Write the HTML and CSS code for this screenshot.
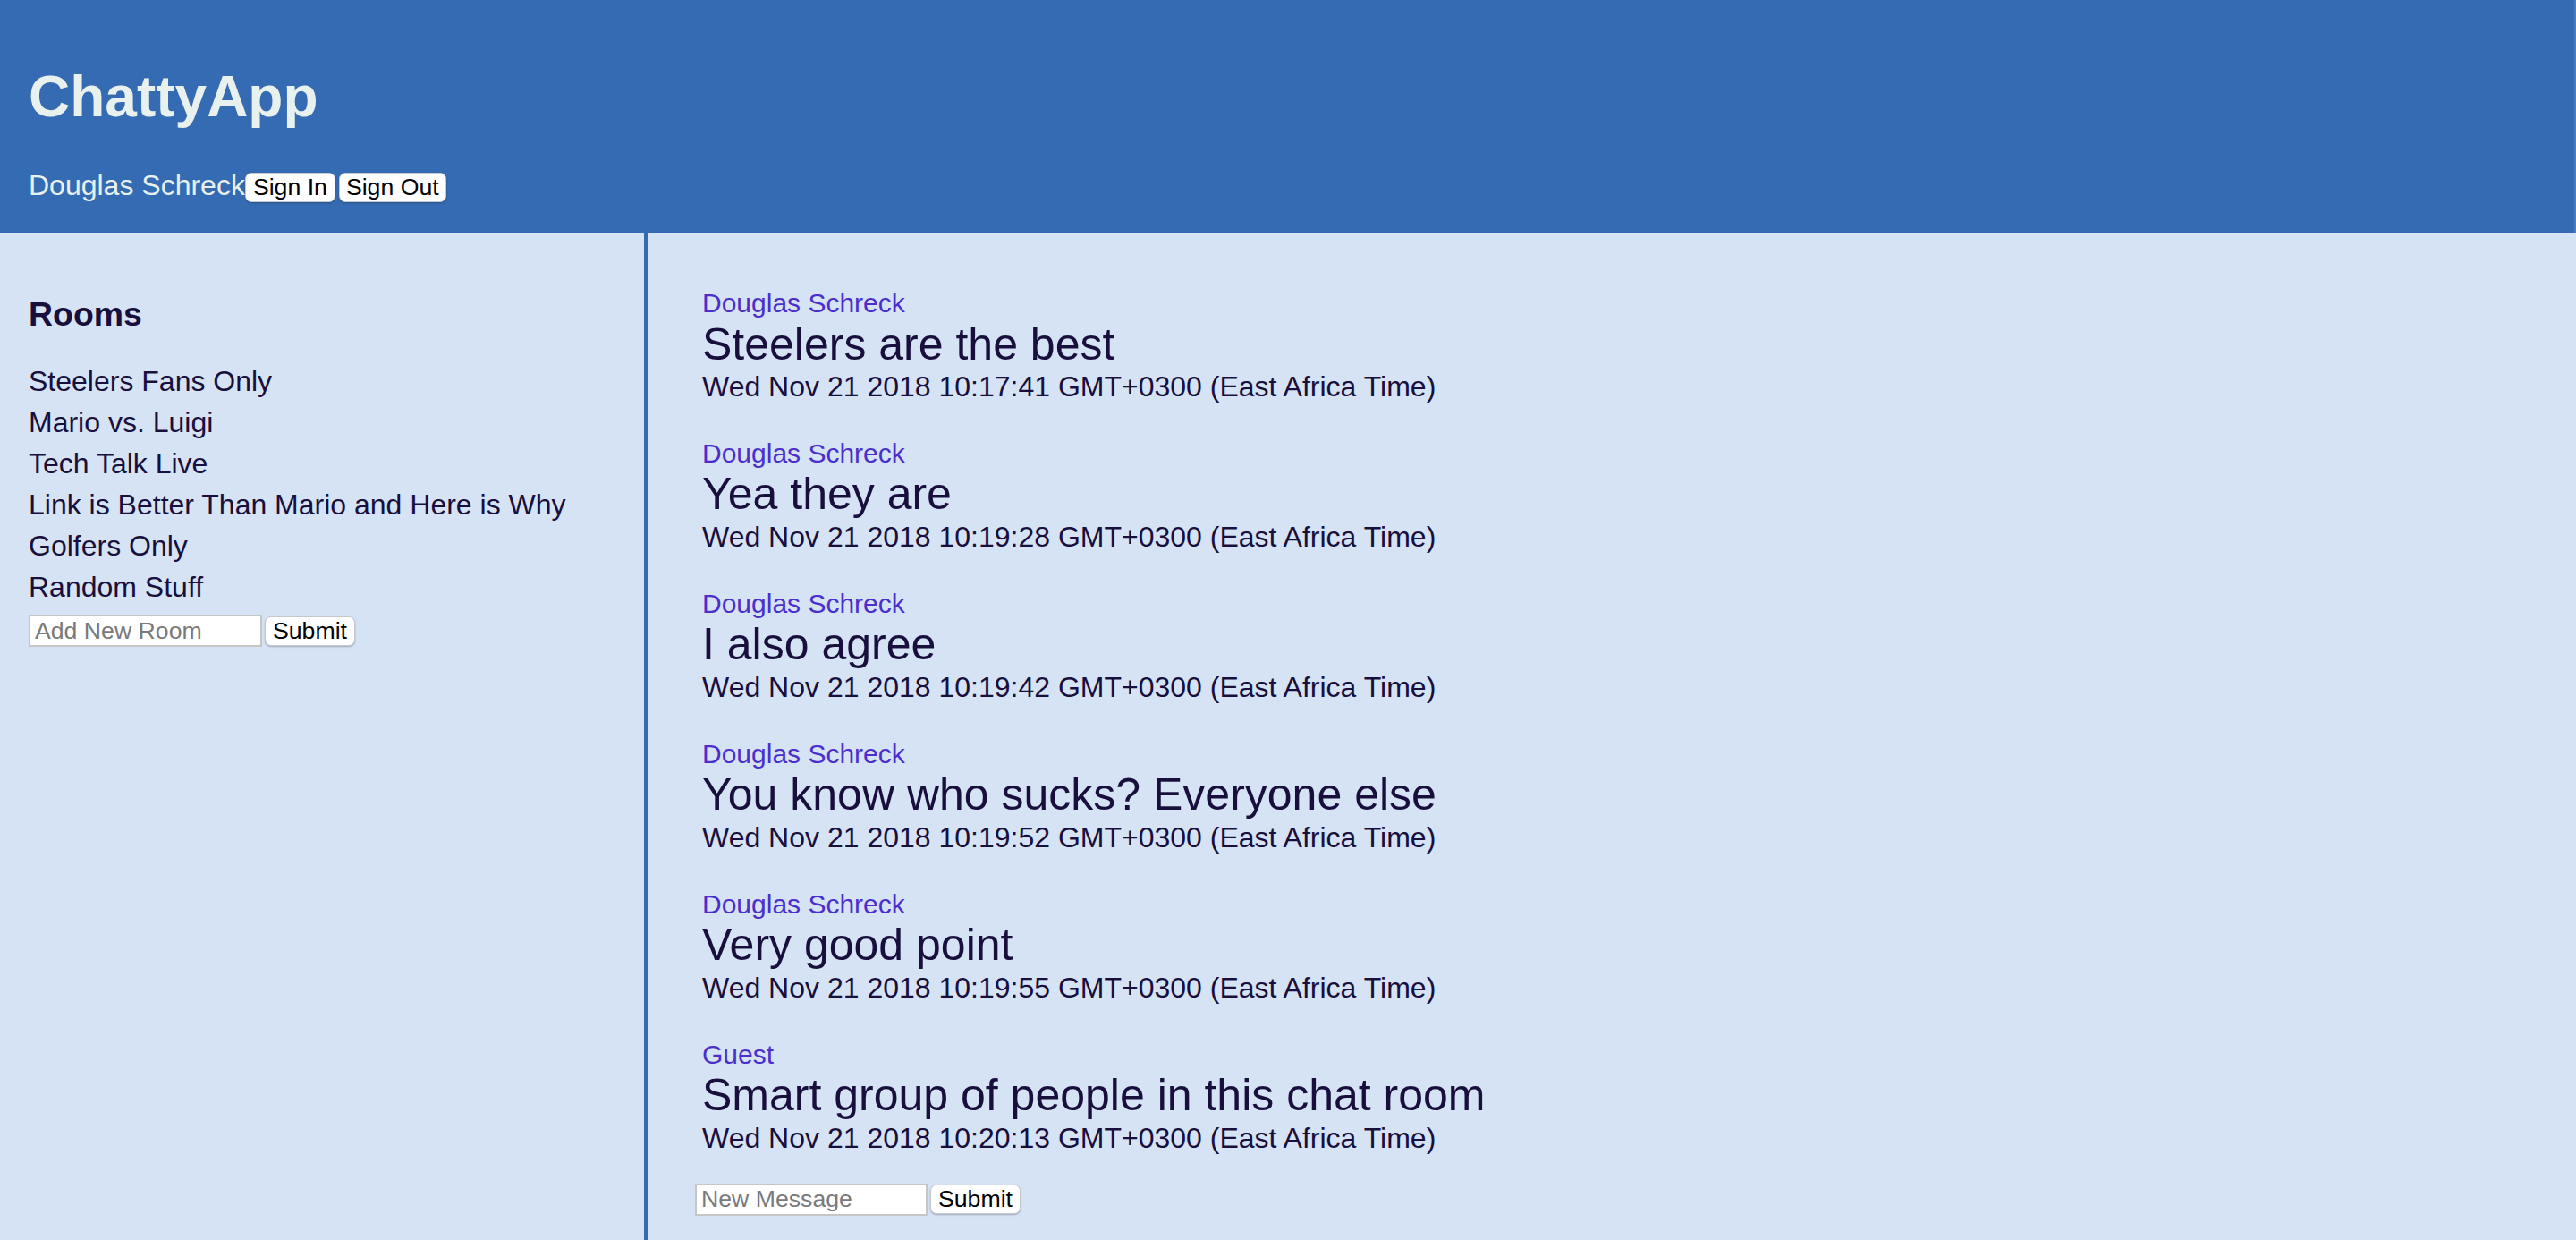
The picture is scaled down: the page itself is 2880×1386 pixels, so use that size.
FILE: index.html
```html
<!DOCTYPE html>
<html lang="en">
<head>
<meta charset="utf-8">
<title>ChattyApp</title>
<link rel="stylesheet" href="styles.css">
</head>
<body>
<header class="topbar">
  <h1 class="brand">ChattyApp</h1>
  <div class="user-line"><span class="user-name">Douglas Schreck</span><button class="btn">Sign In</button><button class="btn btn-next">Sign Out</button></div>
</header>
<main class="layout">
  <aside class="sidebar">
    <h3 class="rooms-title">Rooms</h3>
    <ul class="room-list">
      <li>Steelers Fans Only</li>
      <li>Mario vs. Luigi</li>
      <li>Tech Talk Live</li>
      <li>Link is Better Than Mario and Here is Why</li>
      <li>Golfers Only</li>
      <li>Random Stuff</li>
    </ul>
    <form class="inline-form">
      <input class="text-input" type="text" placeholder="Add New Room">
      <button class="btn" type="button">Submit</button>
    </form>
  </aside>
  <section class="chat">
    <div class="messages">
      <div class="message">
        <div class="msg-user">Douglas Schreck</div>
        <div class="msg-text">Steelers are the best</div>
        <div class="msg-time">Wed Nov 21 2018 10:17:41 GMT+0300 (East Africa Time)</div>
      </div>
      <div class="message">
        <div class="msg-user">Douglas Schreck</div>
        <div class="msg-text">Yea they are</div>
        <div class="msg-time">Wed Nov 21 2018 10:19:28 GMT+0300 (East Africa Time)</div>
      </div>
      <div class="message">
        <div class="msg-user">Douglas Schreck</div>
        <div class="msg-text">I also agree</div>
        <div class="msg-time">Wed Nov 21 2018 10:19:42 GMT+0300 (East Africa Time)</div>
      </div>
      <div class="message">
        <div class="msg-user">Douglas Schreck</div>
        <div class="msg-text">You know who sucks? Everyone else</div>
        <div class="msg-time">Wed Nov 21 2018 10:19:52 GMT+0300 (East Africa Time)</div>
      </div>
      <div class="message">
        <div class="msg-user">Douglas Schreck</div>
        <div class="msg-text">Very good point</div>
        <div class="msg-time">Wed Nov 21 2018 10:19:55 GMT+0300 (East Africa Time)</div>
      </div>
      <div class="message">
        <div class="msg-user">Guest</div>
        <div class="msg-text">Smart group of people in this chat room</div>
        <div class="msg-time">Wed Nov 21 2018 10:20:13 GMT+0300 (East Africa Time)</div>
      </div>
    </div>
    <form class="inline-form message-form">
      <input class="text-input" type="text" placeholder="New Message">
      <button class="btn" type="button">Submit</button>
    </form>
  </section>
</main>
</body>
</html>
```
FILE: styles.css
```css
* { box-sizing: border-box; }

html, body {
  margin: 0;
  padding: 0;
}

body {
  background: #d6e3f4;
  font-family: "Liberation Sans", Arial, Helvetica, sans-serif;
  color: #180f3d;
  min-height: 100vh;
  display: flex;
  flex-direction: column;
}

.topbar {
  background: #356bb3;
  color: #e9f1ee;
  height: 260px;
  padding: 28px 32px 0 32px;
  border-right: 2px solid #4a7cc0;
}

.brand {
  margin: 43px 0 44px 0;
  font-size: 64px;
  line-height: 74px;
  font-weight: bold;
}

.user-line {
  font-size: 32px;
  line-height: 37px;
}

.btn {
  font-family: "Liberation Sans", Arial, Helvetica, sans-serif;
  font-size: 26.67px;
  color: #000;
  background: #fff;
  border: 1px solid #c4c8cf;
  border-radius: 7px;
  height: 33px;
  padding: 0 8px;
  margin: 0;
  box-shadow: 0 1px 2px rgba(0, 0, 0, 0.25);
  vertical-align: baseline;
  line-height: 29px;
}

.btn-next {
  margin-left: 4px;
  padding: 0 7px;
}

.layout {
  flex: 1;
  display: grid;
  grid-template-columns: 720px 1fr;
}

.sidebar {
  padding: 32px 32px;
}

.rooms-title {
  font-size: 37.44px;
  line-height: 43px;
  font-weight: bold;
  margin: 37.5px 0 30.5px 0;
}

.room-list {
  list-style: none;
  margin: 0;
  padding: 0;
  font-size: 32px;
  line-height: 46px;
}

.inline-form {
  display: flex;
  align-items: center;
  gap: 3px;
  margin-top: 8px;
}

.text-input {
  width: 261px;
  height: 36px;
  border: 2px solid #c6c6c6;
  background: #fff;
  padding: 0 5px;
  font-family: "Liberation Sans", Arial, Helvetica, sans-serif;
  font-size: 26.67px;
  color: #000;
  margin: 0;
  outline: none;
}

.text-input::placeholder {
  color: #7a7a7a;
}

.chat {
  border-left: 4px solid #356bb3;
  padding: 62px 0 0 53px;
}

.messages {
  display: flex;
  flex-direction: column;
  gap: 39.2px;
  padding-left: 8px;
}

.msg-user {
  color: #4b2fcc;
  font-size: 30px;
  line-height: 34.5px;
}

.msg-text {
  font-size: 50px;
  line-height: 57.5px;
}

.msg-time {
  font-size: 32px;
  line-height: 36.8px;
}

.message-form {
  margin-top: 32px;
}

.message-form .text-input {
  width: 260px;
}
```
